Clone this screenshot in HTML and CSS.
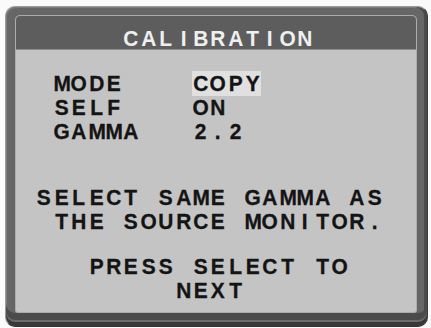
FILE: index.html
```html
<!DOCTYPE html>
<html lang="en">
<head>
<meta charset="utf-8">
<title>Calibration OSD</title>
<link rel="stylesheet" href="styles.css">
<script src="script.js" defer></script>
</head>
<body>
<div class="bezel">
  <div class="panel">
    <div class="title"><div class="osd line">      CALIBRATION</div></div>
    <div class="content">
      <div class="group settings">
        <div class="osd line">  MODE    <span class="sel">COPY</span></div>
        <div class="osd line">  SELF    ON</div>
        <div class="osd line">  GAMMA   2.2</div>
      </div>
      <div class="group message">
        <div class="osd line"> SELECT SAME GAMMA AS</div>
        <div class="osd line">  THE SOURCE MONITOR.</div>
      </div>
      <div class="group prompt">
        <div class="osd line">    PRESS SELECT TO</div>
        <div class="osd line">         NEXT</div>
      </div>
    </div>
  </div>
</div>
</body>
</html>
```

FILE: styles.css
```css
html, body {
  margin: 0;
  padding: 0;
  background: #fafafa;
}

body {
  width: 431px;
  height: 328px;
  overflow: hidden;
  font-family: "Liberation Sans", Arial, sans-serif;
}

.bezel {
  box-sizing: border-box;
  height: 321px;
  margin: 6px 3px 0 5px;
  padding: 9px 11px 14px 10px;
  border: 1px solid #9a9a9a;
  border-right-color: #3c3c3c;
  border-bottom-color: #353535;
  border-radius: 10px;
  background: #666666;
  box-shadow:
    inset 0 -4px 0 #383838,
    inset 0 -6px 0 #6c6c6c,
    inset 0 -13px 0 #4b4b4b,
    inset -3px 0 0 #4a4a4a,
    inset 1px 1px 0 #7c7c7c;
}

.panel {
  height: 100%;
  display: flex;
  flex-direction: column;
  background: #c4c4c4;
  border-radius: 4px 4px 2px 2px;
  box-shadow: 0 0 0 1px #ababab;
  overflow: hidden;
}

.title {
  box-sizing: border-box;
  height: 34px;
  padding: 11px 0 0 2px;
  background: #5d5d5d;
  border-bottom: 1px solid #8c8c8c;
  color: #efefef;
  font-weight: bold;
}

.title .line {
  line-height: 23px;
}

.content {
  padding: 22px 0 0 2px;
  color: #141414;
  font-weight: bold;
  -webkit-text-stroke: 0.3px #141414;
}

.line {
  font-size: 22px;
  line-height: 24px;
  white-space: pre;
}

.message {
  margin-top: 42px;
}

.prompt {
  margin-top: 21px;
}

.ch {
  display: inline-block;
  width: 17.4px;
  text-align: center;
  transform: scaleX(0.95);
}

.sel {
  background: #e0e0e0;
}
```

FILE: script.js
```js
(function () {
  function split(node) {
    Array.prototype.slice.call(node.childNodes).forEach(function (n) {
      if (n.nodeType === 3) {
        var frag = document.createDocumentFragment();
        Array.from(n.textContent).forEach(function (c) {
          var s = document.createElement('span');
          s.className = 'ch';
          s.textContent = c === ' ' ? '\u00a0' : c;
          frag.appendChild(s);
        });
        n.parentNode.replaceChild(frag, n);
      } else if (n.nodeType === 1) {
        split(n);
      }
    });
  }
  document.querySelectorAll('.osd').forEach(split);
})();
```
